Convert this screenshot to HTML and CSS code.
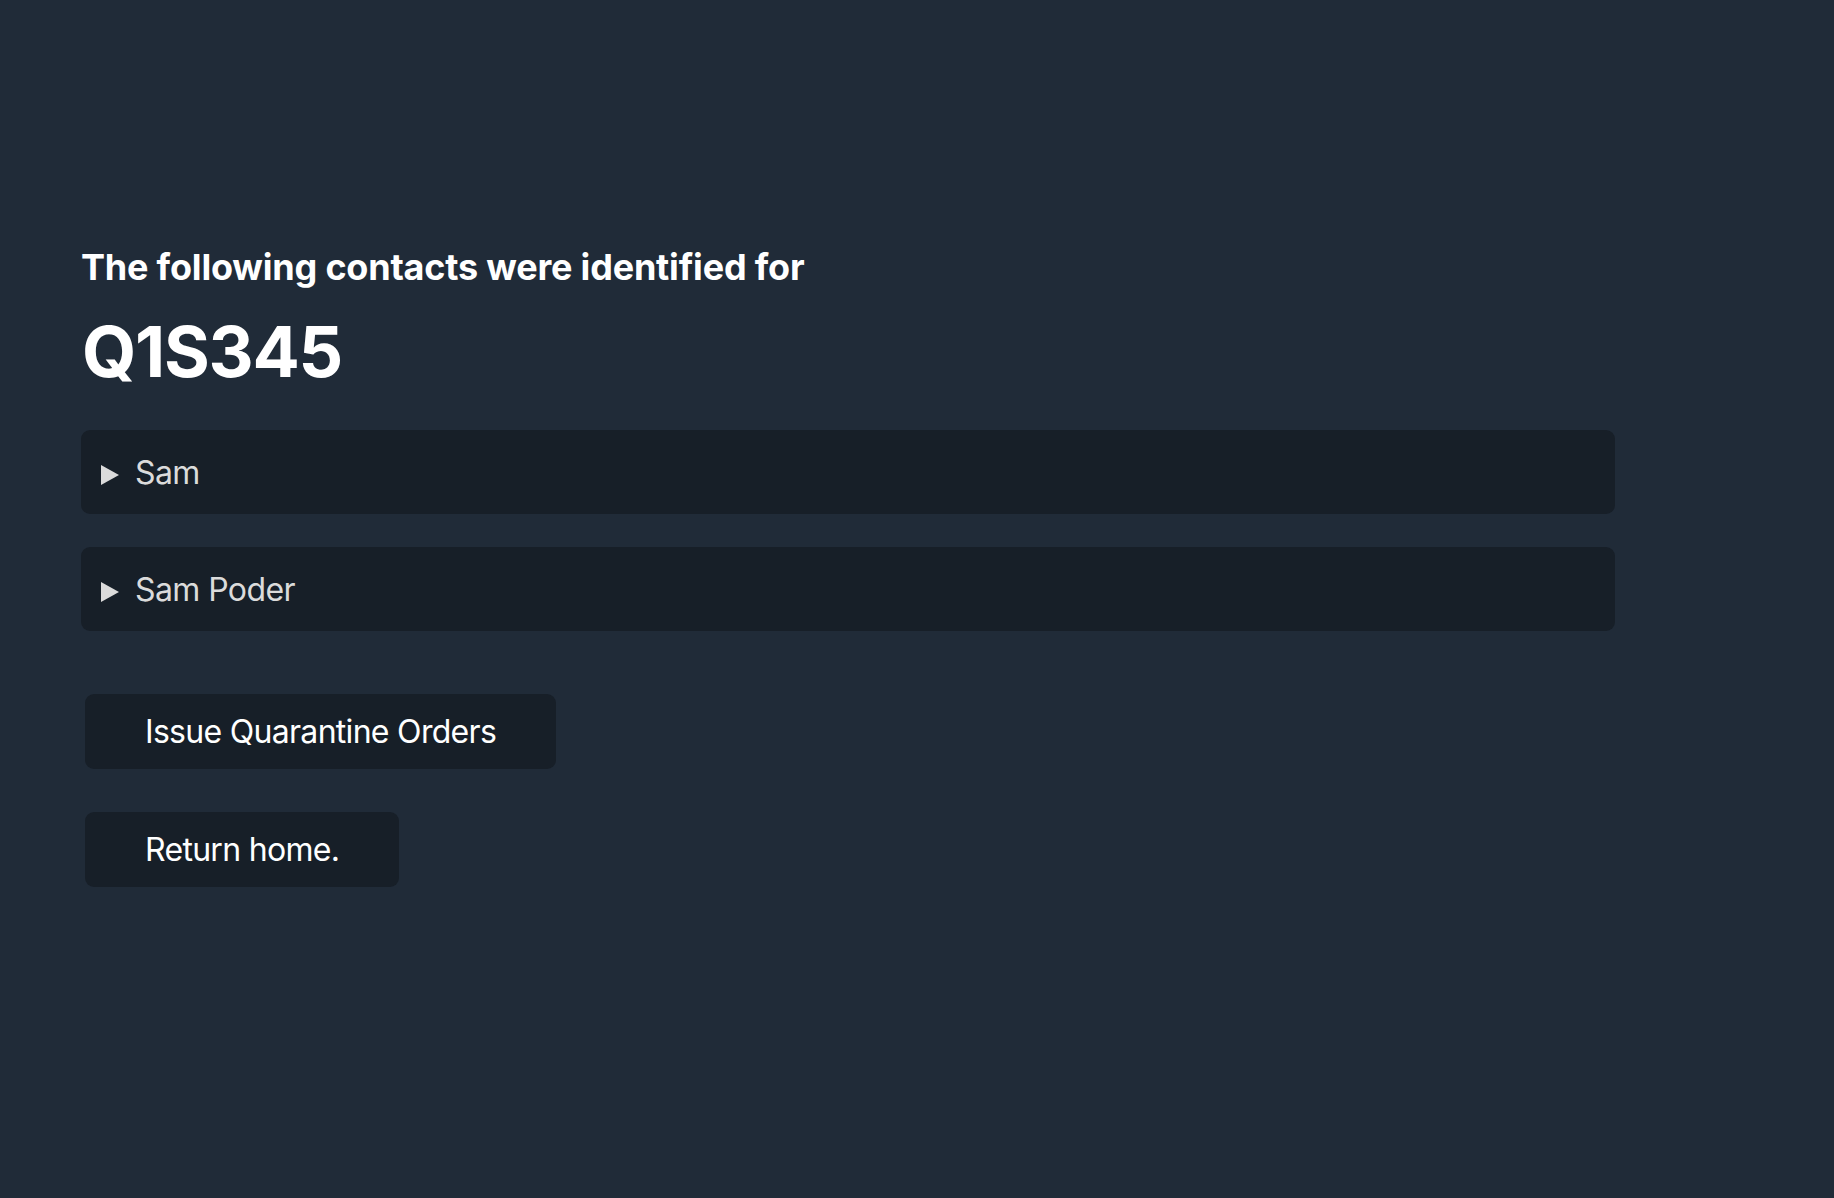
FILE: index.html
```html
<!DOCTYPE html>
<html lang="en">
<head>
<meta charset="utf-8">
<title>Contacts</title>
<link rel="stylesheet" href="styles.css">
</head>
<body>
<main class="page">
  <h3 class="lead">The following contacts were identified for</h3>
  <h1 class="code">Q1S345</h1>
  <div class="contacts">
    <details class="contact">
      <summary class="contact-summary"><span class="caret"></span>Sam</summary>
    </details>
    <details class="contact">
      <summary class="contact-summary"><span class="caret"></span>Sam Poder</summary>
    </details>
  </div>
  <div class="actions">
    <button class="btn" type="button">Issue Quarantine Orders</button>
    <button class="btn" type="button">Return home.</button>
  </div>
</main>
</body>
</html>
```

FILE: styles.css
```css
html, body {
  margin: 0;
  padding: 0;
  background: #202b38;
}

body {
  font-family: Inter, "Noto Sans", "Liberation Sans", sans-serif;
  color: #dbdbdb;
  min-height: 1198px;
}

.page {
  width: 1534px;
  padding: 245px 0 0 81px;
  display: flex;
  flex-direction: column;
}

.lead {
  margin: 0;
  font-size: 36px;
  line-height: 44px;
  font-weight: 700;
  color: #ffffff;
  letter-spacing: -0.2px;
}

.code {
  margin: 21px 0 0 1px;
  font-size: 70px;
  line-height: 84px;
  font-weight: 700;
  color: #ffffff;
  letter-spacing: -1.3px;
}

.contacts {
  margin-top: 36px;
  display: flex;
  flex-direction: column;
  gap: 33px;
}

.contact {
  background: #171f28;
  border-radius: 9px;
}

.contact-summary {
  list-style: none;
  display: flex;
  align-items: center;
  padding: 23px 20px 21px;
  font-size: 32px;
  line-height: 40px;
  color: #dbdbdb;
  letter-spacing: -0.6px;
  cursor: pointer;
}

.contact-summary::-webkit-details-marker {
  display: none;
}

.caret {
  width: 0;
  height: 0;
  border-top: 10.5px solid transparent;
  border-bottom: 10.5px solid transparent;
  border-left: 18px solid #dbdbdb;
  margin-right: 16px;
  margin-top: 3px;
}

.actions {
  margin-top: 63px;
  display: flex;
  flex-direction: column;
  align-items: flex-start;
  gap: 43px;
  padding-left: 4px;
}

.btn {
  font-family: Inter, "Noto Sans", "Liberation Sans", sans-serif;
  font-size: 32px;
  line-height: 40px;
  color: #ffffff;
  background: #171f28;
  border: none;
  border-radius: 9px;
  padding: 18px 60px 17px;
  margin: 0;
  letter-spacing: -0.7px;
  cursor: pointer;
}
```
